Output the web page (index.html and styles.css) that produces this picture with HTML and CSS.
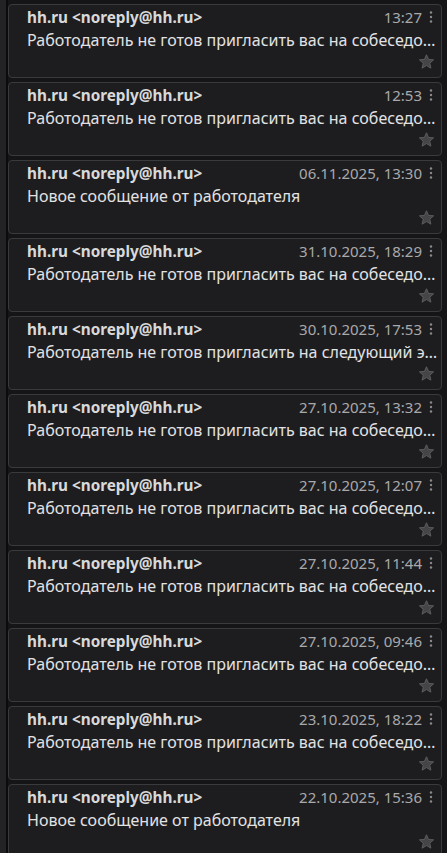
FILE: index.html
```html
<!DOCTYPE html>
<html lang="ru">
<head>
    <meta charset="UTF-8">
    <meta name="viewport" content="width=device-width, initial-scale=1.0">
    <title>Входящие</title>
    <link rel="stylesheet" href="styles.css">
</head>
<body>
    <div class="layout">
        <div class="rail"></div>
        <div class="list" id="list"></div>
    </div>

    <script>
        const mails = [
            ['13:27', 'Работодатель не готов пригласить вас на собеседование'],
            ['12:53', 'Работодатель не готов пригласить вас на собеседование'],
            ['06.11.2025, 13:30', 'Новое сообщение от работодателя'],
            ['31.10.2025, 18:29', 'Работодатель не готов пригласить вас на собеседование'],
            ['30.10.2025, 17:53', 'Работодатель не готов пригласить на следующий этап'],
            ['27.10.2025, 13:32', 'Работодатель не готов пригласить вас на собеседование'],
            ['27.10.2025, 12:07', 'Работодатель не готов пригласить вас на собеседование'],
            ['27.10.2025, 11:44', 'Работодатель не готов пригласить вас на собеседование'],
            ['27.10.2025, 09:46', 'Работодатель не готов пригласить вас на собеседование'],
            ['23.10.2025, 18:22', 'Работодатель не готов пригласить вас на собеседование'],
            ['22.10.2025, 15:36', 'Новое сообщение от работодателя']
        ];

        const list = document.getElementById('list');
        mails.forEach(([date, subject]) => {
            const card = document.createElement('div');
            card.className = 'mail';
            card.innerHTML = `
                <div class="mail-head">
                    <span class="sender">hh.ru &lt;noreply@hh.ru&gt;</span>
                    <span class="date">${date}</span>
                    <svg class="kebab" width="4" height="14" viewBox="0 0 4 14"><circle cx="2" cy="2.5" r="1.2"/><circle cx="2" cy="7" r="1.2"/><circle cx="2" cy="11.5" r="1.2"/></svg>
                </div>
                <div class="subject">${subject}</div>
                <div class="mail-foot">
                    <svg class="star" width="17" height="17" viewBox="0 0 24 24"><path d="M12 2.5l2.9 6.6 7.1.6-5.4 4.7 1.6 7-6.2-3.7-6.2 3.7 1.6-7L2 9.7l7.1-.6z"/></svg>
                </div>
            `;
            list.appendChild(card);
        });
    </script>
</body>
</html>
```

FILE: styles.css
```css
body {
    margin: 0;
    background: #151517;
    font-family: "Noto Sans", "Open Sans", sans-serif;
    overflow: hidden;
}
.layout {
    display: flex;
    height: 853px;
}
.rail {
    width: 6px;
    flex: none;
    background: #232325;
    border-right: 2px solid #0b0b0c;
}
.list {
    width: 434px;
    display: flex;
    flex-direction: column;
    gap: 4px;
    padding-top: 4px;
}
.mail {
    height: 74px;
    flex: none;
    box-sizing: border-box;
    background: #1d1d1f;
    border: 1px solid #3a3a3c;
    border-radius: 4px;
    padding: 0 6px 0 18px;
    display: flex;
    flex-direction: column;
}
.mail-head {
    display: flex;
    align-items: center;
    height: 23px;
}
.sender {
    flex: 1;
    font-weight: bold;
    font-size: 15.3px;
    color: #d9d9d9;
}
.date {
    font-size: 15px;
    color: #a9a9ab;
}
.kebab {
    fill: #8a8a8c;
    margin-left: 7px;
    margin-right: 2px;
}
.subject {
    margin-top: 1px;
    margin-right: -4px;
    font-size: 16px;
    color: #e2e2e4;
    white-space: nowrap;
    overflow: hidden;
    text-overflow: ellipsis;
    line-height: 22px;
}
.mail-foot {
    display: flex;
    justify-content: flex-end;
    margin-top: 2px;
}
.star {
    fill: #454548;
    stroke: #5c5c5e;
    stroke-width: 1.4;
}
```
